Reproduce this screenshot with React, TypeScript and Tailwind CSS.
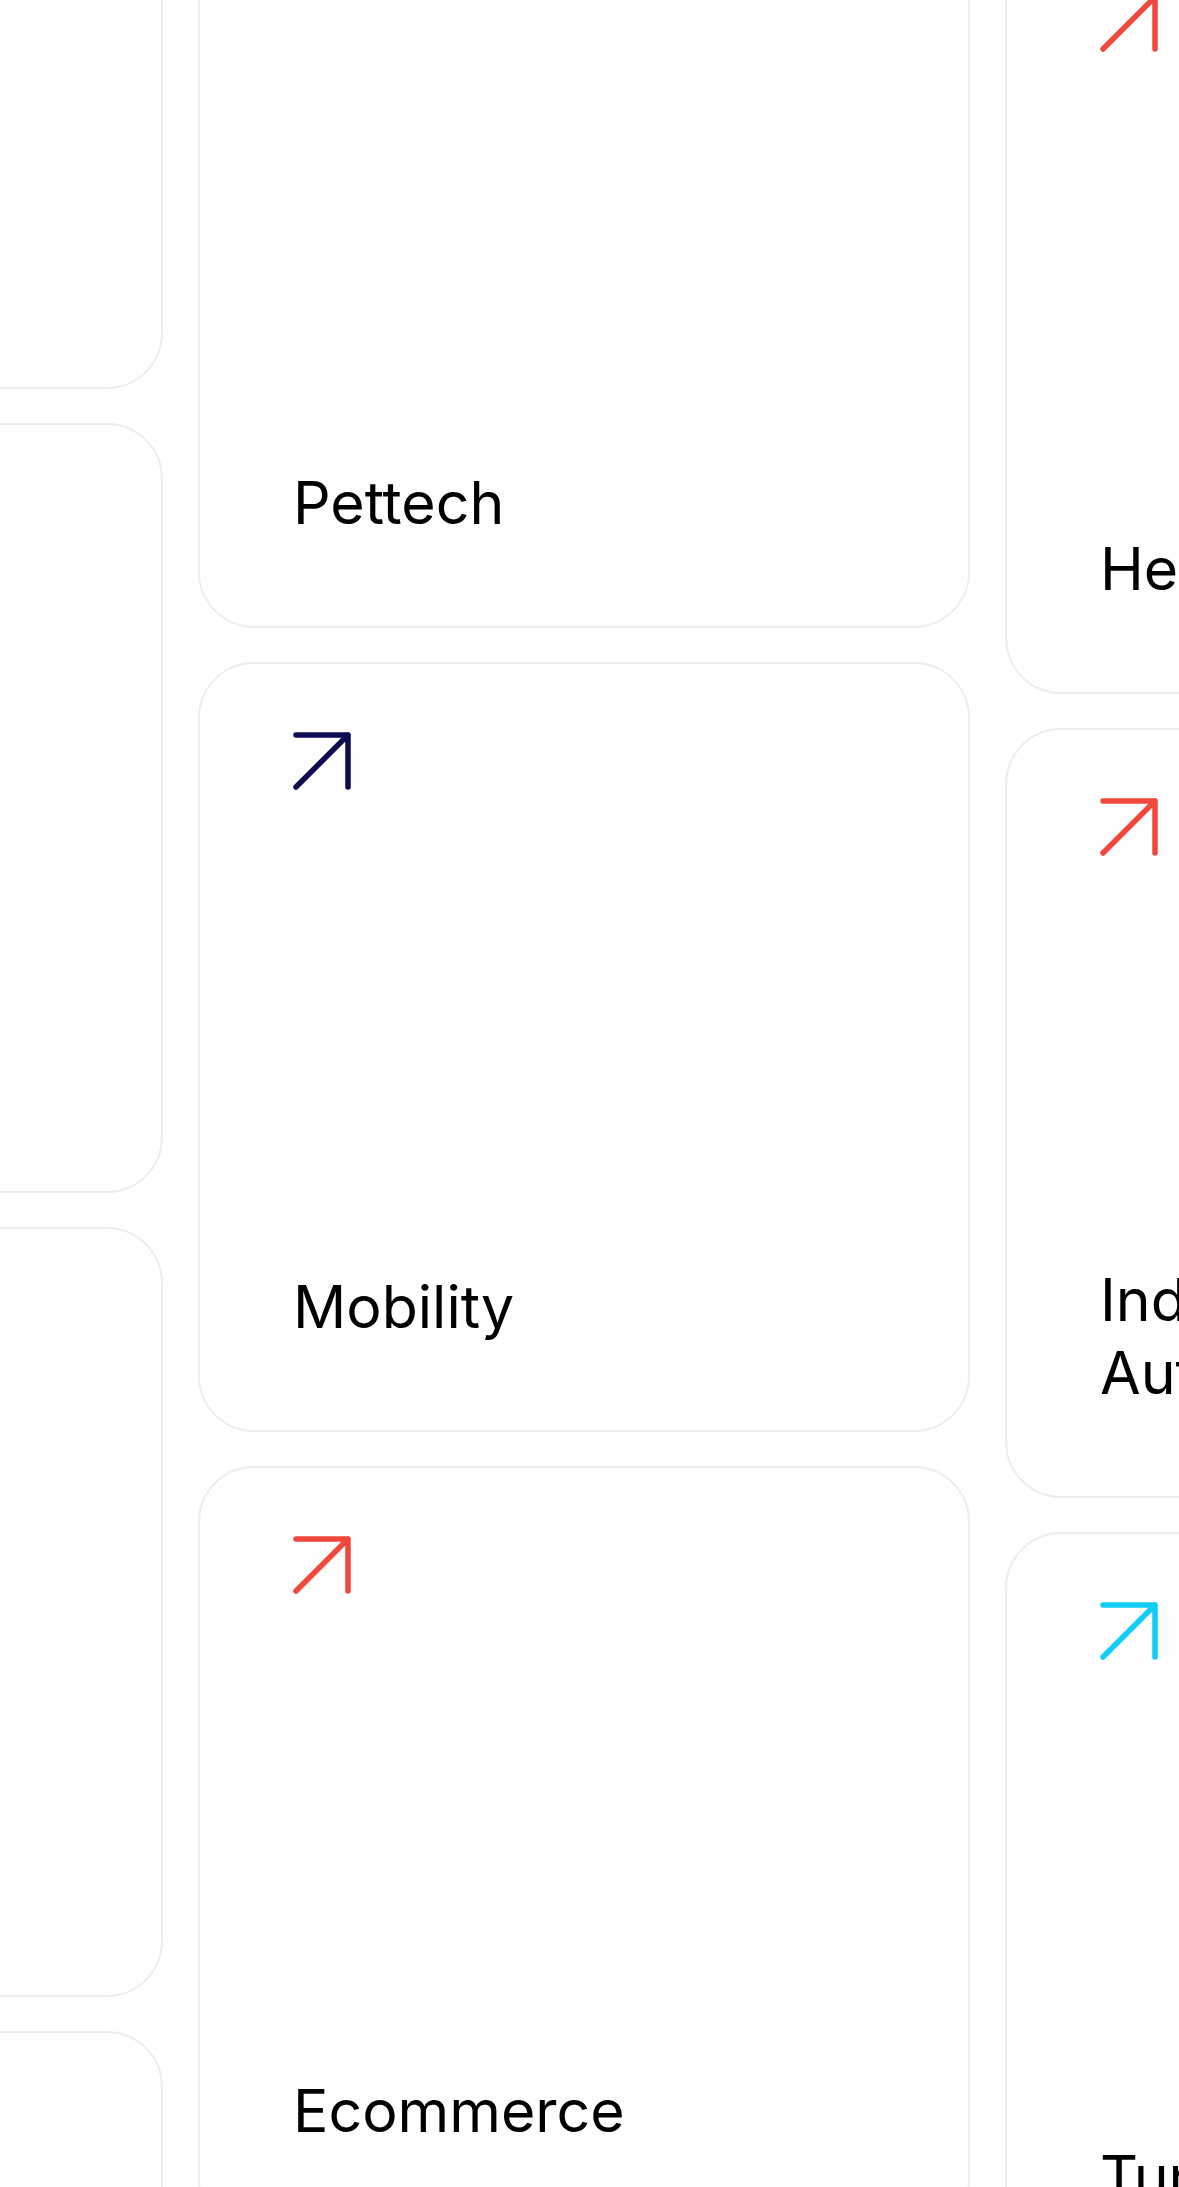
import React from 'react';

type Card = {
  title: string;
  color: string;
};

const columns: { offset: string; cards: Card[] }[] = [
  {
    offset: 'mt-[-381px]',
    cards: [
      { title: 'Fintech', color: '#f2473d' },
      { title: 'Edtech', color: '#0e0b52' },
      { title: 'Retail', color: '#0fcdf4' },
      { title: 'Logistics', color: '#f2473d' },
    ],
  },
  {
    offset: 'mt-[-142px]',
    cards: [
      { title: 'Pettech', color: '#0fcdf4' },
      { title: 'Mobility', color: '#0e0b52' },
      { title: 'Ecommerce', color: '#f2473d' },
    ],
  },
  {
    offset: 'mt-[-76px]',
    cards: [
      { title: 'Healthtech', color: '#f2473d' },
      { title: 'Industrial Automation', color: '#f2473d' },
      { title: 'Turismo', color: '#0fcdf4' },
    ],
  },
];

function Arrow({ color }: { color: string }) {
  return (
    <svg width="58" height="58" viewBox="0 0 58 58" fill="none" className="block">
      <path
        d="M3 3H55V55M3 55L55 3"
        stroke={color}
        strokeWidth="5.5"
        strokeLinecap="round"
        strokeLinejoin="round"
      />
    </svg>
  );
}

function IndustryCard({ card }: { card: Card }) {
  return (
    <div className="w-[772px] h-[770px] shrink-0 rounded-[56px] border-2 border-[#ededed] bg-[#fefefe] pl-[93px] pr-[93px] pt-[68px] pb-[87px] flex flex-col justify-between">
      <Arrow color={card.color} />
      <h3 className="max-w-[480px] text-[59px] leading-[73px] font-normal text-black">
        {card.title}
      </h3>
    </div>
  );
}

export default function App() {
  return (
    <div
      className="w-[1179px] h-[2187px] overflow-hidden bg-white"
      style={{ fontFamily: 'Inter, "Noto Sans", sans-serif' }}
    >
      <div className="flex gap-[35px] ml-[-609px] items-start">
        {columns.map((col, i) => (
          <div key={i} className={`flex flex-col gap-[34px] shrink-0 ${col.offset}`}>
            {col.cards.map((card) => (
              <IndustryCard key={card.title} card={card} />
            ))}
          </div>
        ))}
      </div>
    </div>
  );
}
